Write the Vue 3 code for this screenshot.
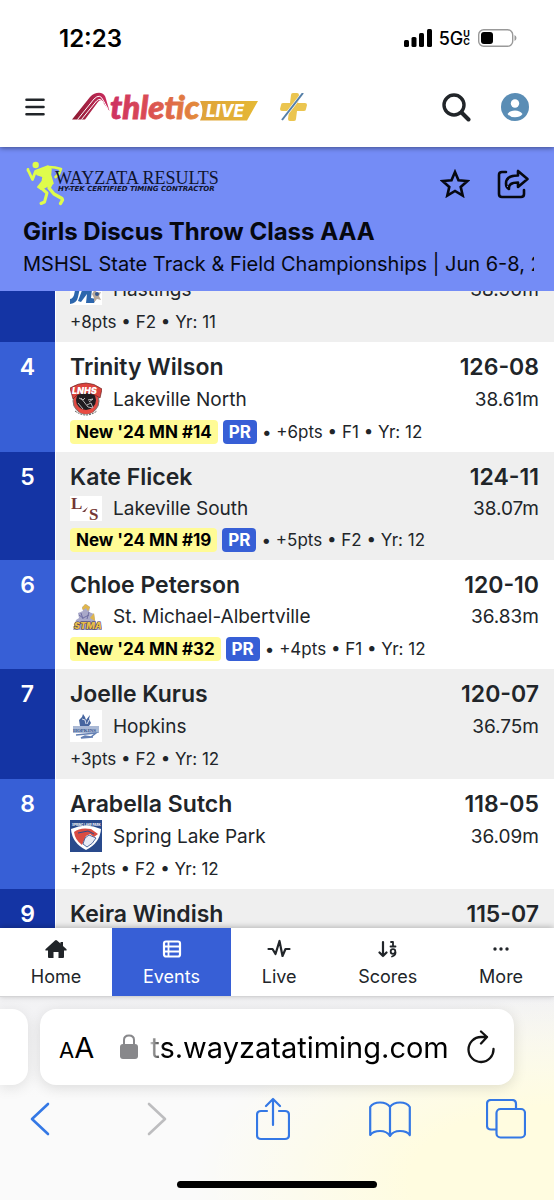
<script setup>
import { ref, onMounted } from 'vue';

const list = ref(null);
const url = ref('ts.wayzatatiming.com');
const activeTab = ref('Events');

const tabs = ['Home', 'Events', 'Live', 'Scores', 'More'];

const results = [
  { place: 3, name: 'Ava Carlson', school: 'Hastings', logo: 'hastings', mark: '127-08', metric: '38.90m', details: '+8pts • F2 • Yr: 11' },
  { place: 4, name: 'Trinity Wilson', school: 'Lakeville North', logo: 'north', mark: '126-08', metric: '38.61m', rank: "New '24 MN #14", details: '• +6pts • F1 • Yr: 12' },
  { place: 5, name: 'Kate Flicek', school: 'Lakeville South', logo: 'south', mark: '124-11', metric: '38.07m', rank: "New '24 MN #19", details: '• +5pts • F2 • Yr: 12' },
  { place: 6, name: 'Chloe Peterson', school: 'St. Michael-Albertville', logo: 'stma', mark: '120-10', metric: '36.83m', rank: "New '24 MN #32", details: '• +4pts • F1 • Yr: 12' },
  { place: 7, name: 'Joelle Kurus', school: 'Hopkins', logo: 'hopkins', mark: '120-07', metric: '36.75m', details: '+3pts • F2 • Yr: 12' },
  { place: 8, name: 'Arabella Sutch', school: 'Spring Lake Park', logo: 'spring', mark: '118-05', metric: '36.09m', details: '+2pts • F2 • Yr: 12' },
  { place: 9, name: 'Keira Windish', school: '', logo: '', mark: '115-07', metric: '', details: '' }
];

onMounted(() => {
  // start part way down the results
  list.value.scrollTop = 59;
});
</script>

<template>
  <div class="phone">
    <div class="status">
      <span class="time">12:23</span>
      <div class="signal">
        <svg width="28" height="18" viewBox="0 0 28 18">
          <rect x="0" y="11" width="5" height="7" rx="1.5" />
          <rect x="7.5" y="8" width="5" height="10" rx="1.5" />
          <rect x="15" y="4" width="5" height="14" rx="1.5" />
          <rect x="23" y="0" width="5" height="18" rx="1.5" />
        </svg>
        <span class="network">5G</span>
        <span class="uc"><span>U</span><span>C</span></span>
        <svg width="39" height="18" viewBox="0 0 39 18">
          <rect x="0.7" y="0.7" width="34" height="16.6" rx="5" fill="none" stroke="#999" stroke-width="1.4" />
          <rect x="3" y="3" width="12" height="12" rx="3" />
          <path d="M36.5 6v6q2-1 2-3t-2-3z" fill="#999" />
        </svg>
      </div>
    </div>

    <header class="topbar">
      <button class="icon-btn menu" aria-label="Menu">
        <svg width="20" height="18" viewBox="0 0 20 18" fill="none" stroke="#212529" stroke-width="2.6" stroke-linecap="round">
          <path d="M1.5 1.8h17M1.5 9h17M1.5 16.2h17" />
        </svg>
      </button>
      <a href="#" class="brand" aria-label="AthleticLIVE">
        <svg width="186" height="30" viewBox="0 0 186 30">
          <defs>
            <linearGradient id="word" gradientUnits="userSpaceOnUse" x1="36" y1="0" x2="130" y2="0">
              <stop offset="0" stop-color="#cc2f63" />
              <stop offset="0.4" stop-color="#da4b55" />
              <stop offset="1" stop-color="#e49139" />
            </linearGradient>
            <linearGradient id="track" x1="0" y1="0" x2="1" y2="0">
              <stop offset="0" stop-color="#8b1a30" />
              <stop offset="1" stop-color="#ce2d61" />
            </linearGradient>
            <linearGradient id="flag" x1="0" y1="0" x2="1" y2="0">
              <stop offset="0" stop-color="#dfa23a" />
              <stop offset="1" stop-color="#e5b935" />
            </linearGradient>
          </defs>
          <path d="M0 27.500 18 5Q23 0 29 1q4 1 5 6l3.500 12-6-8Q29 6 26 10L13 27.500z" fill="url(#track)" />
          <path d="M5.500 27.500 22 7q6-6 9 1l5 9M9.500 27.500 24.500 9q4-4 7 2" fill="none" stroke="#fff" stroke-width="1" />
          <path d="M128 9h58l-11 19.500h-47q5-10 0-19.500z" fill="url(#flag)" />
          <text x="38" y="27" class="word" fill="url(#word)" stroke="url(#word)">thletic</text>
          <text x="134" y="25" class="live">LIVE</text>
        </svg>
      </a>
      <svg class="plus" width="28" height="28" viewBox="0 0 28 28">
        <path d="M11 2q0-2 2-2h4q2 0 2 2l-1 8h7q2 0 2 2l-1 4q0 2-2 2h-7l-1 8q0 2-2 2h-4q-2 0-2-2l1-8H2q-2 0-2-2l1-4q0-2 2-2h7z" fill="#ebc550" />
        <path d="M23 0 2 27" stroke="#fff" stroke-width="3" />
        <path d="M23 0 2 27" stroke="#557fa8" stroke-width="2" />
      </svg>
      <div class="actions">
        <button class="icon-btn" aria-label="Search">
          <svg width="29" height="29" viewBox="0 0 29 29" fill="none" stroke="#212529" stroke-linecap="round">
            <circle cx="12" cy="12" r="10" stroke-width="3.4" />
            <path d="m19.5 19.5 7 7" stroke-width="4" />
          </svg>
        </button>
        <button class="icon-btn" aria-label="Account">
          <svg width="28" height="28" viewBox="0 0 28 28">
            <circle cx="14" cy="14" r="14" fill="#5a8db5" />
            <circle cx="14" cy="10.5" r="4.2" fill="#fff" />
            <path d="M6.5 21Q9 17.5 14 17.5T21.5 21Q19 24.3 14 24.3T6.5 21z" fill="#fff" />
          </svg>
        </button>
      </div>
    </header>

    <section class="event">
      <div class="event-top">
        <svg width="200" height="46" viewBox="0 0 200 46">
          <g fill="#dffc4c" stroke="#dffc4c" stroke-linejoin="round" stroke-linecap="round">
            <circle cx="12.700" cy="4" r="3.200" stroke="none" />
            <path d="M13 9.500 25 5l3 3-.5 6 2.500 8.500-3 2-8-2 1-7-6-2z" stroke-width="1.500" />
            <path d="m12.500 10.500-3 8-4-8.500M5 9.500l0-1" fill="none" stroke-width="2.800" />
            <path d="m26 6 6 .5 6 1.500-2 5-3.500 3" fill="none" stroke-width="2.600" />
            <path d="m19 21-4 5 3 2 8-4z" stroke-width="2" />
            <path d="m17 26 7 6-2.500 9-3.500 1.500" fill="none" stroke-width="3" />
            <path d="M28 23 26 27l5 6 8 4.500.500 1.500-2 3.500" fill="none" stroke-width="3.400" />
          </g>
          <text x="32" y="23" class="wayzata">WAYZATA RESULTS</text>
          <text x="35" y="30" class="hytek">HY-TEK CERTIFIED TIMING CONTRACTOR</text>
        </svg>
        <div class="event-actions">
          <button class="icon-btn" aria-label="Favorite">
            <svg width="30" height="29" viewBox="0 0 30 29" fill="none" stroke="#06080f" stroke-width="2.6">
              <path d="m15 3 3.5 8.2 8.9.8-6.7 5.9 2 8.7-7.7-4.6-7.7 4.6 2-8.7L2.600 12l8.900-.8z" />
            </svg>
          </button>
          <button class="icon-btn" aria-label="Share">
            <svg width="32" height="30" viewBox="0 0 32 30" fill="none" stroke="#06080f" stroke-width="2.6" stroke-linecap="round" stroke-linejoin="round">
              <path d="M9 3H5Q2 3 2 6v19q0 3 3 3h19q3 0 3-3v-4" />
              <path d="M21 2v4.500q-12 0-12 8 0 4 3 5.500-1-6.500 9-6.500V18l9.500-8z" />
            </svg>
          </button>
        </div>
      </div>
      <h1>Girls Discus Throw Class AAA</h1>
      <p class="meet">MSHSL State Track &amp; Field Championships | Jun 6-8, 2024</p>
    </section>

    <ol ref="list" class="results">
      <li v-for="r in results" :key="r.place" class="row">
        <div class="place">{{ r.place }}</div>
        <div class="athlete">
          <div class="line name">
            <span>{{ r.name }}</span>
            <span>{{ r.mark }}</span>
          </div>
          <div class="line school" :class="r.logo">
            <svg v-if="r.logo === 'hastings'" width="32" height="32" viewBox="0 0 32 32">
              <path d="M0 0h32v32H0z" fill="#fff" />
              <path d="M5 10 12 6 8 24q-1 6-8 7v-5q4 0 5-9zM14 12l9-4-2 17 5 1-2 4h-8l1-9-6 8-3-1z" fill="#2c66ad" />
              <path d="m22 21 3-5 2 4 4-1-2 4 2 4-4-1-3 3v-4z" fill="#b5a89c" />
              <circle cx="27" cy="21" r="2" fill="#35568b" />
            </svg>
            <svg v-else-if="r.logo === 'north'" width="32" height="34" viewBox="0 0 32 34">
              <circle cx="16" cy="19" r="13" fill="#df4a43" stroke="#777" />
              <circle cx="16" cy="18" r="10" fill="#211c20" />
              <path d="M0 6Q8 1 16 1t16 6l-2 9-5-3Q16 9 7 13l-4 4z" fill="#dd433d" stroke="#6c2525" stroke-width="0.7" />
              <text x="2" y="12" class="mini" fill="#fff">LNHS</text>
              <path d="m9 16 4 2 2-2m3 2 5-1-4 3m-2 3 4-2 2 5-5-1M8 21l5 6m-2-11 7 9" stroke="#b8b7b8" fill="none" />
              <path d="M7 25q8 7 18 0l-2 5q-7 4-14 0z" fill="#e94b43" />
              <path d="M5 29q11 8 22 0" stroke="#555" fill="none" stroke-dasharray="2 1" />
            </svg>
            <svg v-else-if="r.logo === 'south'" width="32" height="25" viewBox="0 0 32 25">
              <path d="M0 0h32v25H0z" fill="#fff" />
              <text x="1" y="13" class="serif-mark">L</text>
              <text x="19" y="24" class="serif-mark">S</text>
              <path d="m12 16 6-5-3 5z" fill="#7a4140" />
            </svg>
            <svg v-else-if="r.logo === 'stma'" width="32" height="26" viewBox="0 0 32 26">
              <path d="M3 26 6 16l3-2-1-5 5-2-1-4 4-3 4 3-1 5 5 2 1 6 4 10z" fill="#a9a9c9" />
              <path d="m12 4 3-4 5 3-2 4-2-3-3 2zM20 14l4-5 1 8z" fill="#dfb64c" />
              <path d="m9 11 4 3 6-3m-8-2 2 6m6-7-2 7" stroke="#6e6da3" fill="none" />
              <text x="4" y="25" class="stma-mark">STMA</text>
            </svg>
            <svg v-else-if="r.logo === 'hopkins'" width="32" height="32" viewBox="0 0 32 32">
              <path d="M0 0h32v32H0z" fill="#fff" />
              <path d="m10 16-1-6 3-3 1-3 2 3 1 3 4-5-1 4 2 4-2 3z" fill="#46659f" />
              <path d="m12 9 3 1 1 4m3-4-2 4" stroke="#d6ddec" fill="none" />
              <path d="M3 16h26v7H3z" fill="#aab9d5" />
              <text x="3" y="22" class="hopkins-mark">HOPKINS</text>
              <path d="m6 25 20-2-5 4-6-1-4 2 12-1" stroke="#6480b4" stroke-width="1.500" fill="none" />
            </svg>
            <svg v-else-if="r.logo === 'spring'" width="32" height="32" viewBox="0 0 32 32">
              <path d="M0 0h32v32H0z" fill="#294a8c" />
              <path d="M1 9q15-7 30 0-1 14-15 21Q2 23 1 9z" fill="#fff" />
              <path d="M4 12Q10 7 21 9l7 5-4 3-4-3-4 2-4 9q-7-5-8-13z" fill="#d94c43" />
              <path d="m15 18 4-3 7 3q-3 6-9 9l-4-3z" fill="#e8ebf5" stroke="#294a8c" stroke-width="0.800" />
              <path d="m8 13 10-2 6 3" stroke="#294a8c" fill="none" />
              <text x="2" y="6" class="tiny">SPRING LAKE PARK</text>
            </svg>
            <span class="school-name">{{ r.school }}</span>
            <span>{{ r.metric }}</span>
          </div>
          <div class="details">
            <span v-if="r.rank" class="rank">{{ r.rank }}</span>
            <span v-if="r.rank" class="pr">PR</span>
            <span>{{ r.details }}</span>
          </div>
        </div>
      </li>
    </ol>

    <nav class="tabs">
      <button v-for="tab in tabs" :key="tab" :class="{ active: tab === activeTab }" @click="activeTab = tab">
        <svg v-if="tab === 'Home'" width="22" height="20" viewBox="0 0 22 20" fill="currentColor">
          <path d="M10 1.400q1-.9 2 0l3.500 3V3h2.500v4l3.300 3q1 1.500-.6 1.500H19V18q0 1-1 1h-4.500v-6h-5v6H4q-1 0-1-1v-6.500H1.300Q-.3 11.500.7 10z" />
        </svg>
        <svg v-else-if="tab === 'Events'" width="20" height="20" viewBox="0 0 20 20" fill="none" stroke="currentColor" stroke-width="2.200">
          <rect x="2" y="2.500" width="16" height="15" rx="2" />
          <path d="M2 7.500h16M2 12.500h16M6.500 3v14" stroke-width="1.800" />
        </svg>
        <svg v-else-if="tab === 'Live'" width="24" height="20" viewBox="0 0 24 20" fill="none" stroke="currentColor" stroke-width="2.200" stroke-linejoin="round" stroke-linecap="round">
          <path d="M1.500 10h4l3 5 4-13 3 15 3-7h4" />
        </svg>
        <svg v-else-if="tab === 'Scores'" width="20" height="20" viewBox="0 0 20 20" fill="none" stroke="currentColor" stroke-width="2.200" stroke-linecap="round" stroke-linejoin="round">
          <path d="M5 3v14M1.500 13.500 5 17l3.500-3.500" />
          <path d="M13 3h2v4.500M12.500 7.500h5M17.500 13.500q0 3-3.500 4" stroke-width="1.800" />
          <circle cx="15" cy="12.500" r="2.300" stroke-width="1.800" />
        </svg>
        <svg v-else width="20" height="20" viewBox="0 0 20 20" fill="currentColor">
          <circle cx="4" cy="10" r="1.700" />
          <circle cx="10" cy="10" r="1.700" />
          <circle cx="16" cy="10" r="1.700" />
        </svg>
        <span>{{ tab }}</span>
      </button>
    </nav>

    <footer class="browser">
      <div class="address-row">
        <div class="previous"></div>
        <div class="address">
          <button class="aa" aria-label="Page settings"><small>A</small>A</button>
          <svg class="lock" width="18" height="26" viewBox="0 0 18 26">
            <rect y="10" width="18" height="15" rx="3" fill="#88888b" />
            <path d="M4 11V6q0-4.500 5-4.500T14 6v5" fill="none" stroke="#88888b" stroke-width="2" />
          </svg>
          <input v-model="url" type="text" aria-label="Address" />
          <button class="icon-btn" aria-label="Reload">
            <svg width="28" height="34" viewBox="0 0 28 34" fill="none" stroke="#111" stroke-width="2.300" stroke-linecap="round" stroke-linejoin="round">
              <path d="M26.500 19a12.500 12.500 0 1 1-12.500-12h6M14 1.500 20 7l-6 6.500" />
            </svg>
          </button>
        </div>
        <div class="next"></div>
      </div>
      <div class="toolbar">
        <button class="icon-btn" aria-label="Back">
          <svg width="20" height="34" viewBox="0 0 20 34" fill="none" stroke="#3478e5" stroke-width="2.600" stroke-linecap="round" stroke-linejoin="round">
            <path d="M18 2 2 17l16 15" />
          </svg>
        </button>
        <button class="icon-btn" aria-label="Forward">
          <svg width="20" height="34" viewBox="0 0 20 34" fill="none" stroke="#bdbdbf" stroke-width="2.600" stroke-linecap="round" stroke-linejoin="round">
            <path d="m2 2 16 15L2 32" />
          </svg>
        </button>
        <button class="icon-btn" aria-label="Share page">
          <svg width="34" height="44" viewBox="0 0 34 44" fill="none" stroke="#3478e5" stroke-width="2.200" stroke-linecap="round" stroke-linejoin="round">
            <path d="M11 14H5q-4 0-4 4v20q0 4 4 4h24q4 0 4-4V18q0-4-4-4h-6M17 28V2M10 9l7-7 7 7" />
          </svg>
        </button>
        <button class="icon-btn" aria-label="Bookmarks">
          <svg width="42" height="36" viewBox="0 0 42 36" fill="none" stroke="#3478e5" stroke-width="2.200" stroke-linejoin="round">
            <path d="M21 6Q18 1.500 11 1.500T1.200 6v28q3-4 9.800-4t10 5q3-5 10-5t9.800 4V6Q38 1.500 31 1.500T21 6zv29" />
          </svg>
        </button>
        <button class="icon-btn" aria-label="Tabs">
          <svg width="40" height="40" viewBox="0 0 40 40" fill="none" stroke="#3478e5" stroke-width="2.200">
            <path d="M10 30.500H5q-4 0-4-4V5q0-4 4-4h21q4 0 4 4v5" />
            <rect x="10.500" y="10" width="28.500" height="28.500" rx="4" />
          </svg>
        </button>
      </div>
      <div class="indicator"></div>
    </footer>
  </div>
</template>

<style>
body {
  margin: 0;
}
</style>

<style scoped>
.phone {
  display: flex;
  flex-direction: column;
  height: 100vh;
  background: #fff;
  color: #212529;
  font-family: Inter, "Liberation Sans", sans-serif;
  overflow: hidden;
}

button {
  font-family: inherit;
  color: inherit;
  border: none;
  background: none;
  padding: 0;
  cursor: pointer;
}

svg {
  display: block;
  flex-shrink: 0;
}

.icon-btn {
  display: flex;
  justify-content: center;
}

.status {
  display: flex;
  align-items: center;
  justify-content: space-between;
  height: 58px;
  padding: 9px 37px 0 59px;
  background: #fff;
  color: #000;
  position: relative;
  z-index: 3;
}

.time {
  font-size: 24px;
  font-weight: 600;
}

.signal {
  display: flex;
  align-items: center;
}

.network {
  margin-left: 7px;
  font-size: 18px;
  font-weight: 500;
}

.uc {
  display: flex;
  flex-direction: column;
  margin-right: 8px;
  font-size: 9px;
  line-height: 8px;
  font-weight: 700;
}

.topbar {
  display: flex;
  align-items: center;
  height: 80px;
  padding: 0 25px;
  background: #fff;
  box-shadow: 0 1px 5px rgba(0, 0, 0, 0.45);
  position: relative;
  z-index: 2;
}

.brand {
  margin-left: 27px;
}

.plus {
  margin-left: 22px;
}

.actions {
  display: flex;
  gap: 30px;
  margin-left: auto;
}

.word {
  font: italic 900 33px Lato, sans-serif;
  stroke-width: 0.8px;
}

.live {
  font: italic 800 17px Inter, sans-serif;
  fill: #fff;
}

.event {
  padding: 14px 20px 12px 23px;
  background: #748cf6;
  color: #06080f;
  position: relative;
  z-index: 1;
}

.event-top {
  display: flex;
  align-items: center;
  justify-content: space-between;
}

.event-actions {
  display: flex;
  gap: 27px;
  margin-right: 5px;
}

.wayzata {
  font: 18px "Liberation Serif", serif;
  fill: #10142d;
}

.hytek {
  font: italic 700 7px "DejaVu Sans", sans-serif;
  fill: #10142d;
}

h1 {
  margin: 8px 0 0;
  font-size: 24px;
  line-height: 34px;
  font-weight: 700;
}

.meet {
  margin: 0;
  font-size: 20px;
  line-height: 30px;
  white-space: nowrap;
  overflow: hidden;
}

.results {
  flex: 1;
  min-height: 0;
  margin: 0;
  padding: 0;
  list-style: none;
  overflow-y: auto;
  scrollbar-width: none;
}

.row {
  display: flex;
}

.place {
  width: 55px;
  padding-top: 10px;
  margin-right: 1px;
  background: #1434a4;
  color: #fff;
  font-size: 23px;
  line-height: 30px;
  font-weight: 600;
  text-align: center;
}

.athlete {
  flex: 1;
  padding: 10px 15px 4px 14px;
  background: #efefef;
}

.row:nth-child(even) .place {
  background: #375fd6;
}

.row:nth-child(even) .athlete {
  background: #fff;
}

.line {
  display: flex;
  align-items: center;
  justify-content: space-between;
}

.name {
  font-size: 23px;
  line-height: 30px;
  font-weight: 600;
}

.school {
  height: 34px;
  font-size: 19px;
}

.school.south {
  height: 32px;
}

.school.stma {
  height: 33px;
}

.school-name {
  flex: 1;
  margin-left: 11px;
}

.details {
  display: flex;
  align-items: center;
  gap: 5px;
  height: 32px;
  font-size: 17px;
}

.rank,
.pr {
  padding: 0 6px;
  border-radius: 4px;
  font-size: 17px;
  line-height: 24px;
  font-weight: 700;
}

.rank {
  background: #fffb96;
  color: #000;
}

.pr {
  background: #375fd6;
  color: #fff;
}

.mini {
  font: italic 900 9px Inter, sans-serif;
}

.serif-mark {
  font: 700 17px "Liberation Serif", serif;
  fill: #743735;
}

.stma-mark {
  font: italic 900 9px Inter, sans-serif;
  fill: #e8bd48;
  stroke: #342d59;
  stroke-width: 1px;
  paint-order: stroke;
}

.hopkins-mark {
  font: 700 5px "Liberation Serif", serif;
  fill: #34558f;
}

.tiny {
  font: 700 3px Inter, sans-serif;
  fill: #fff;
}

.tabs {
  display: flex;
  height: 68px;
  background: #fff;
  border-bottom: 1px solid #d4d4d6;
  box-shadow: 0 -1px 6px rgba(0, 0, 0, 0.25);
  position: relative;
  z-index: 1;
}

.tabs button {
  flex: 1 1 auto;
  display: flex;
  flex-direction: column;
  align-items: center;
  justify-content: center;
  gap: 5px;
  padding-top: 4px;
  font-size: 18px;
  line-height: 26px;
}

.tabs .active {
  background: #375fd6;
  color: #fff;
}

.browser {
  padding: 12px 0;
  background:
    radial-gradient(ellipse 65% 90% at 100% 90%, #fffce0 40%, rgba(255, 252, 224, 0)),
    linear-gradient(#f2f2f4, #fafafa 50%);
}

.address-row {
  display: flex;
  gap: 12px;
}

.previous,
.next {
  flex: 0 0 28px;
}

.previous {
  border-radius: 0 16px 16px 0;
  background: #fff;
  box-shadow: 0 3px 14px rgba(0, 0, 0, 0.1);
}

.address {
  flex: 1;
  min-width: 0;
  display: flex;
  align-items: center;
  height: 76px;
  padding: 0 19px;
  box-sizing: border-box;
  border-radius: 16px;
  background: #fff;
  box-shadow: 0 3px 14px rgba(0, 0, 0, 0.12);
  color: #000;
}

.aa {
  font-size: 29px;
}

.aa small {
  font-size: 22px;
}

.lock {
  margin: 0 12px 0 26px;
}

.address input {
  flex: 1;
  min-width: 0;
  margin-right: 14px;
  padding: 0;
  border: none;
  outline: none;
  background: none;
  color: #000;
  font-family: inherit;
  font-size: 29px;
  -webkit-mask-image: linear-gradient(90deg, rgba(0, 0, 0, 0.2), #000 14px);
  mask-image: linear-gradient(90deg, rgba(0, 0, 0, 0.2), #000 14px);
}

.toolbar {
  display: flex;
  align-items: center;
  justify-content: space-between;
  height: 68px;
  padding: 0 27px 0 19px;
}

.toolbar .icon-btn {
  width: 42px;
}

.indicator {
  width: 36%;
  height: 7px;
  margin: 28px auto 0;
  border-radius: 4px;
  background: #000;
}
</style>
